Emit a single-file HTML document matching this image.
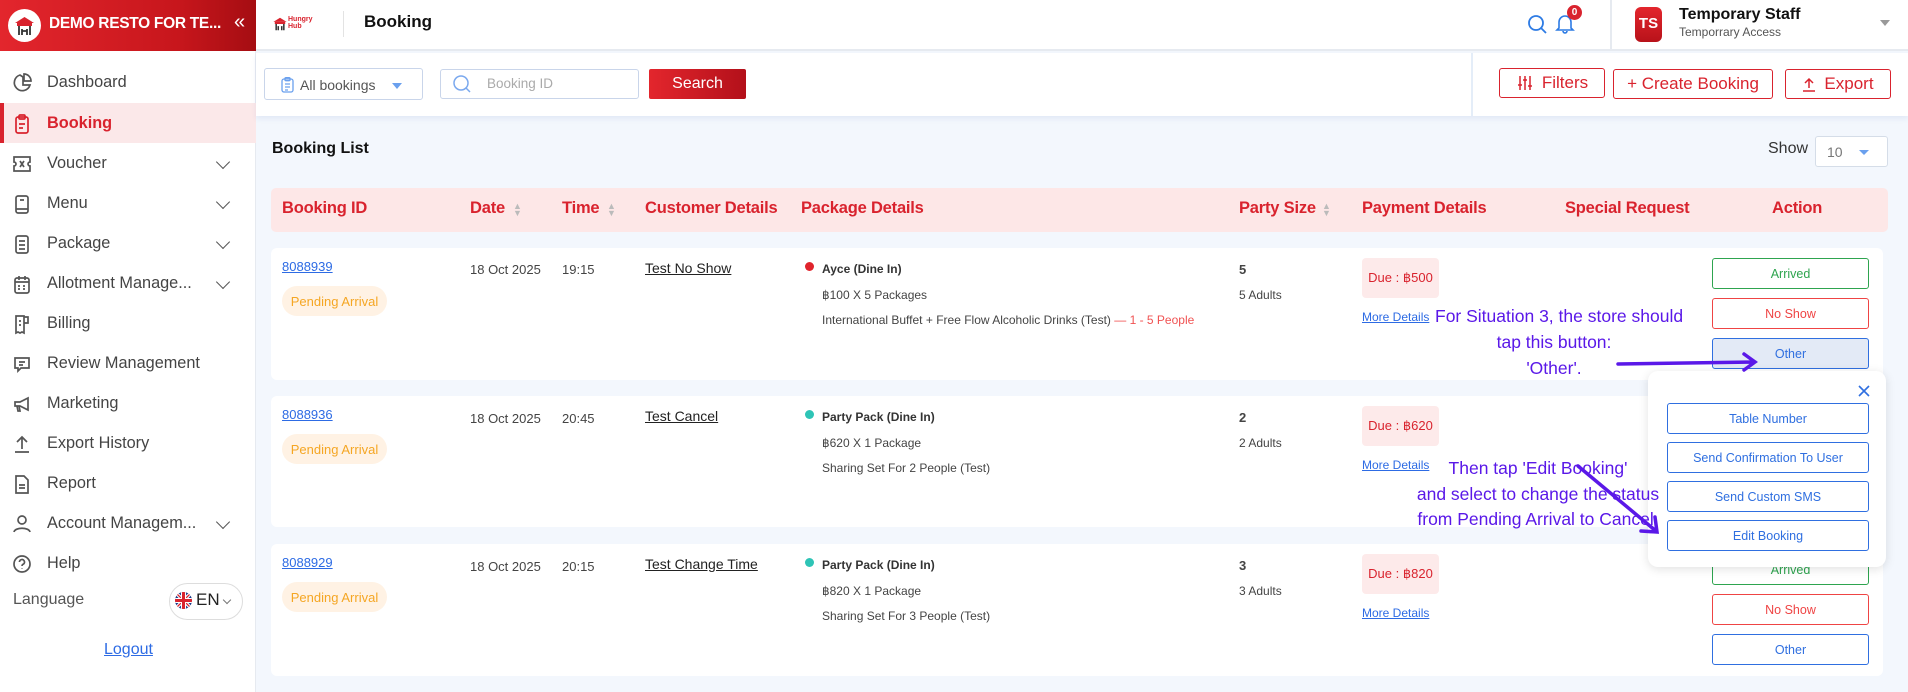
<!DOCTYPE html>
<html><head><meta charset="utf-8">
<style>
*{box-sizing:border-box;margin:0;padding:0}
body{width:1908px;height:692px;overflow:hidden;font-family:"Liberation Sans",sans-serif;background:#f3f7fd;position:relative;color:#333}
.a{position:absolute}
.side{left:0;top:0;width:256px;height:692px;background:#fff;border-right:1px solid #e6eaf0}
.brand{left:0;top:0;width:256px;height:51px;background:linear-gradient(90deg,#e3262d,#c7161c 70%,#a50d12)}
.nav{left:0;width:256px;height:40px;font-size:16.3px;color:#444;display:flex;align-items:center;padding-left:47px}
.nav svg{position:absolute;left:11px;top:10px}
.chev{position:absolute;left:218px;top:14px;width:10px;height:10px;border-right:1.6px solid #555;border-bottom:1.6px solid #555;transform:rotate(45deg)}
.btnr{border:1.5px solid #d9232e;border-radius:3px;color:#d9232e;font-size:17px;display:flex;align-items:center;justify-content:center;background:#fff}
.th{font-size:16.5px;font-weight:bold;color:#d9232e;top:199px;letter-spacing:-0.2px}
.card{left:271px;width:1612px;background:#fff;border-radius:6px}
.id{color:#2d6be4;text-decoration:underline;font-size:13px}
.pill{width:105px;height:30px;border-radius:15px;background:#fff2e4;color:#f5a623;font-size:13px;display:flex;align-items:center;justify-content:center}
.t13{font-size:13px;color:#444}
.due{width:77px;height:40px;background:#fdeaea;border-radius:4px;color:#d9232e;font-size:13px;display:flex;align-items:center;justify-content:center}
.md{font-size:12px;color:#2d6be4;text-decoration:underline}
.ab{width:157px;height:31px;border:1.3px solid;border-radius:3px;font-size:12.5px;display:flex;align-items:center;justify-content:center;background:#fff}
.pb{left:1667px;width:202px;height:31px;border:1.3px solid #2f6fe0;border-radius:3px;color:#2f6fe0;font-size:12.5px;display:flex;align-items:center;justify-content:center;background:#fff}
.ann{color:#5a18e8;font-size:17.5px;text-align:center;white-space:nowrap}
</style></head><body>

<div class="a side"></div>
<div class="a brand"></div>
<div class="a" style="left:8px;top:9px;width:33px;height:33px;border-radius:50%;background:#fff"></div>
<svg class="a" style="left:13px;top:15px" width="23" height="22" viewBox="0 0 23 22"><path d="M2 8 L11.5 2 L21 8 Z" fill="#d9232e"/><rect x="4" y="8" width="15" height="3" fill="#d9232e"/><path d="M6 11v9M17 11v9M9 14v6M14 14v6M9 16h5" stroke="#333" stroke-width="1.8" fill="none"/></svg>
<div class="a" style="left:49px;top:15px;color:#fff;font-weight:bold;font-size:15.5px;letter-spacing:-0.3px;transform:scaleX(1.0)">DEMO RESTO FOR TE...</div>
<div class="a" style="left:234px;top:11px;color:#fff;font-size:20px">«</div>

<div class="a nav" style="top:62px"><svg width="22" height="22" viewBox="0 0 22 22" fill="none" stroke="#555" stroke-width="1.7"><path d="M9 3a8 8 0 1 0 10 10h-7V5z"/><path d="M13 2v7h7a7 7 0 0 0-7-7z"/></svg>Dashboard</div>
<div class="a" style="left:0;top:103px;width:256px;height:40px;background:#fbe8e9;border-left:4px solid #d9232e"></div>
<div class="a nav" style="top:103px;color:#d9232e;font-weight:bold"><svg width="22" height="22" viewBox="0 0 22 22" fill="none" stroke="#d9232e" stroke-width="1.7"><rect x="5" y="4" width="12" height="16" rx="2"/><rect x="8" y="2" width="6" height="4" rx="1"/><path d="M8 11h6M8 15h4"/></svg>Booking</div>
<div class="a nav" style="top:143px"><svg width="22" height="22" viewBox="0 0 22 22" fill="none" stroke="#555" stroke-width="1.7"><path d="M3 4h16v5a2 2 0 0 0 0 4v5H3v-5a2 2 0 0 0 0-4z"/><path d="M9 8l4 6M13 8l-4 6"/></svg>Voucher<span class="chev"></span></div>
<div class="a nav" style="top:183px"><svg width="22" height="22" viewBox="0 0 22 22" fill="none" stroke="#555" stroke-width="1.7"><rect x="5" y="3" width="12" height="17" rx="2"/><path d="M9 7h4M5 16h12"/></svg>Menu<span class="chev"></span></div>
<div class="a nav" style="top:223px"><svg width="22" height="22" viewBox="0 0 22 22" fill="none" stroke="#555" stroke-width="1.7"><rect x="5" y="3" width="12" height="17" rx="2"/><path d="M8 8h6M8 12h6M8 16h6"/></svg>Package<span class="chev"></span></div>
<div class="a nav" style="top:263px"><svg width="22" height="22" viewBox="0 0 22 22" fill="none" stroke="#555" stroke-width="1.7"><rect x="4" y="5" width="14" height="15" rx="2"/><path d="M4 9h14M8 3v4M14 3v4M7 13h2M12 13h2M7 16h2M12 16h2"/></svg>Allotment Manage...<span class="chev"></span></div>
<div class="a nav" style="top:303px"><svg width="22" height="22" viewBox="0 0 22 22" fill="none" stroke="#555" stroke-width="1.7"><path d="M5 20V3h8v17l-2-1-2 1-2-1zM13 4h4v6h-4M8 8h2M8 12h2"/></svg>Billing</div>
<div class="a nav" style="top:343px"><svg width="22" height="22" viewBox="0 0 22 22" fill="none" stroke="#555" stroke-width="1.7"><path d="M4 5h14v10H10l-3 3v-3H4z"/><path d="M8 9h6M8 12h4"/></svg>Review Management</div>
<div class="a nav" style="top:383px"><svg width="22" height="22" viewBox="0 0 22 22" fill="none" stroke="#555" stroke-width="1.7"><path d="M4 9h5l8-4v12l-8-4H4zM6 13l1 5h2l-1-5"/></svg>Marketing</div>
<div class="a nav" style="top:423px"><svg width="22" height="22" viewBox="0 0 22 22" fill="none" stroke="#555" stroke-width="1.7"><path d="M11 16V4M6 9l5-5 5 5M4 19h14"/></svg>Export History</div>
<div class="a nav" style="top:463px"><svg width="22" height="22" viewBox="0 0 22 22" fill="none" stroke="#555" stroke-width="1.7"><path d="M5 3h8l4 4v13H5z"/><path d="M8 12h6M8 15h6"/></svg>Report</div>
<div class="a nav" style="top:503px"><svg width="22" height="22" viewBox="0 0 22 22" fill="none" stroke="#555" stroke-width="1.7"><circle cx="11" cy="7" r="4"/><path d="M3 19c1-5 15-5 16 0"/></svg>Account Managem...<span class="chev"></span></div>
<div class="a nav" style="top:543px"><svg width="22" height="22" viewBox="0 0 22 22" fill="none" stroke="#555" stroke-width="1.7"><circle cx="11" cy="11" r="8"/><path d="M8.5 9a2.5 2.5 0 1 1 3.5 2.3c-.7.4-1 .9-1 1.7M11 15.5v.5"/></svg>Help</div>
<div class="a" style="left:13px;top:591px;font-size:16px;color:#555">Language</div>
<div class="a" style="left:169px;top:583px;width:74px;height:37px;border:1px solid #ddd;border-radius:19px"></div>
<svg class="a" style="left:175px;top:592px" width="17" height="17" viewBox="0 0 20 20"><clipPath id="c"><circle cx="10" cy="10" r="10"/></clipPath><g clip-path="url(#c)"><rect width="20" height="20" fill="#1a3a8a"/><path d="M0 0L20 20M20 0L0 20" stroke="#fff" stroke-width="4"/><path d="M0 0L20 20M20 0L0 20" stroke="#d9232e" stroke-width="1.5"/><path d="M10 0v20M0 10h20" stroke="#fff" stroke-width="6"/><path d="M10 0v20M0 10h20" stroke="#d9232e" stroke-width="3.5"/></g></svg>
<div class="a" style="left:196px;top:590px;font-size:17px;color:#222">EN</div>
<div class="a" style="left:224px;top:597px;width:6px;height:6px;border-right:1px solid #777;border-bottom:1px solid #777;transform:rotate(45deg)"></div>
<div class="a" style="left:104px;top:641px;font-size:16px;color:#2d6be4;text-decoration:underline">Logout</div>

<div class="a" style="left:256px;top:0;width:1652px;height:51px;background:#fff;border-bottom:2px solid #e6eaf0"></div>
<svg class="a" style="left:272px;top:16px" width="16" height="16" viewBox="0 0 23 22"><path d="M2 8 L11.5 2 L21 8 Z" fill="#d9232e"/><rect x="4" y="8" width="15" height="3" fill="#d9232e"/><path d="M6 11v9M17 11v9M9 14v6M14 14v6" stroke="#333" stroke-width="2.2" fill="none"/></svg>
<div class="a" style="left:288px;top:16px;font-size:7px;font-weight:bold;color:#d9232e;line-height:7px">Hungry<br>Hub</div>
<div class="a" style="left:343px;top:11px;width:1px;height:26px;background:#e3e3e3"></div>
<div class="a" style="left:364px;top:12px;font-size:17px;font-weight:bold;color:#111">Booking</div>
<svg class="a" style="left:1526px;top:13px" width="22" height="22" viewBox="0 0 22 22" fill="none" stroke="#2d7be4" stroke-width="1.8"><circle cx="10" cy="10" r="7"/><path d="M15 15l5 5"/></svg>
<svg class="a" style="left:1555px;top:12px" width="20" height="22" viewBox="0 0 20 22" fill="none" stroke="#2d7be4" stroke-width="1.6"><path d="M4 16V10a6 6 0 0 1 12 0v6l2 2H2zM8 19a2 2 0 0 0 4 0"/></svg>
<div class="a" style="left:1567px;top:5px;width:15px;height:15px;border-radius:50%;background:#d9232e;color:#fff;font-size:10px;text-align:center;line-height:15px;font-weight:bold">0</div>
<div class="a" style="left:1610px;top:0;width:2px;height:51px;background:#e6eaf0"></div>
<div class="a" style="left:1635px;top:7px;width:27px;height:35px;border-radius:6px;background:linear-gradient(#e3262d,#b8121a)"></div>
<div class="a" style="left:1635px;top:7px;width:27px;height:35px;color:#fff;font-weight:bold;font-size:15px;text-align:center;line-height:34px">TS</div>
<div class="a" style="left:1679px;top:6px;font-size:16px;font-weight:bold;color:#111">Temporary Staff</div>
<div class="a" style="left:1679px;top:25px;font-size:12px;color:#555">Temporrary Access</div>
<div class="a" style="left:1880px;top:20px;width:0;height:0;border-left:5px solid transparent;border-right:5px solid transparent;border-top:6px solid #999"></div>

<div class="a" style="left:256px;top:53px;width:1652px;height:63px;background:#fff;box-shadow:0 3px 5px rgba(40,80,160,.08)"></div>
<div class="a" style="left:1471px;top:53px;width:2px;height:63px;background:#e4edf8"></div>
<div class="a" style="left:264px;top:68px;width:159px;height:32px;border:1px solid #c9d5ea;border-radius:3px"></div>
<svg class="a" style="left:281px;top:77px" width="13" height="16" viewBox="0 0 13 16" fill="none" stroke="#6aa0ee" stroke-width="1.3"><rect x="1" y="2" width="11" height="13" rx="2"/><rect x="4" y="0.7" width="5" height="3" rx="1"/><path d="M4 7h5M4 10h5M4 13h3"/></svg>
<div class="a" style="left:300px;top:77px;font-size:14px;color:#555">All bookings</div>
<div class="a" style="left:392px;top:83px;border-left:5px solid transparent;border-right:5px solid transparent;border-top:6px solid #6aa0ee"></div>
<div class="a" style="left:440px;top:69px;width:199px;height:30px;border:1px solid #c9d5ea;border-radius:3px"></div>
<svg class="a" style="left:451px;top:73px" width="22" height="22" viewBox="0 0 22 22" fill="none" stroke="#7aa8ee" stroke-width="1.5"><circle cx="10" cy="10" r="7"/><path d="M15 15l4 4"/></svg>
<div class="a" style="left:487px;top:76px;font-size:13.5px;color:#aaa">Booking ID</div>
<div class="a" style="left:649px;top:69px;width:97px;height:30px;border-radius:2px;background:linear-gradient(90deg,#e3262d,#b3101a);color:#fff;font-size:16px;display:flex;align-items:center;justify-content:center">Search</div>
<div class="a btnr" style="left:1499px;top:68px;width:106px;height:30px"><svg width="18" height="18" viewBox="0 0 18 18" fill="none" stroke="#d9232e" stroke-width="1.5" style="margin-right:8px"><path d="M4 2v14M9 2v14M14 2v14M2 11h4M7 6h4M12 12h4"/></svg>Filters</div>
<div class="a btnr" style="left:1613px;top:69px;width:160px;height:30px">+ Create Booking</div>
<div class="a btnr" style="left:1785px;top:69px;width:106px;height:30px"><svg width="14" height="16" viewBox="0 0 14 16" fill="none" stroke="#d9232e" stroke-width="1.5" style="margin-right:8px"><path d="M7 12V3M3 7l4-4 4 4M1 15h12"/></svg>Export</div>

<div class="a" style="left:272px;top:140px;font-size:16px;font-weight:bold;color:#111">Booking List</div>
<div class="a" style="left:1768px;top:140px;font-size:16px;color:#333">Show</div>
<div class="a" style="left:1815px;top:136px;width:73px;height:31px;border:1px solid #d5dde8;border-radius:3px;background:#fff"></div>
<div class="a" style="left:1827px;top:144px;font-size:14px;color:#777">10</div>
<div class="a" style="left:1859px;top:150px;border-left:5px solid transparent;border-right:5px solid transparent;border-top:5px solid #6aa0ee"></div>

<div class="a" style="left:271px;top:188px;width:1617px;height:44px;background:#fde7e7;border-radius:5px"></div>
<div class="a th" style="left:282px">Booking ID</div>
<div class="a th" style="left:470px">Date</div><div class="a" style="left:513px;top:203px;color:#bbb;font-size:9px;line-height:7px">▲<br>▼</div>
<div class="a th" style="left:562px">Time</div><div class="a" style="left:607px;top:203px;color:#bbb;font-size:9px;line-height:7px">▲<br>▼</div>
<div class="a th" style="left:645px">Customer Details</div>
<div class="a th" style="left:801px">Package Details</div>
<div class="a th" style="left:1239px">Party Size</div><div class="a" style="left:1322px;top:203px;color:#bbb;font-size:9px;line-height:7px">▲<br>▼</div>
<div class="a th" style="left:1362px">Payment Details</div>
<div class="a th" style="left:1565px">Special Request</div>
<div class="a th" style="left:1772px">Action</div>

<div class="a card" style="top:248px;height:132px"></div>
<div class="a id" style="left:282px;top:259px">8088939</div>
<div class="a pill" style="left:282px;top:286px">Pending Arrival</div>
<div class="a t13" style="left:470px;top:262px">18 Oct 2025</div>
<div class="a t13" style="left:562px;top:262px">19:15</div>
<div class="a" style="left:645px;top:260px;font-size:14px;color:#222;text-decoration:underline">Test No Show</div>
<div class="a" style="left:805px;top:262px;width:9px;height:9px;border-radius:50%;background:#e0242c"></div>
<div class="a t13" style="left:822px;top:262px;font-weight:bold;font-size:12px;color:#333">Ayce (Dine In)</div>
<div class="a t13" style="left:822px;top:288px;font-size:12px">฿100 X 5 Packages</div>
<div class="a t13" style="left:822px;top:313px;font-size:12px">International Buffet + Free Flow Alcoholic Drinks (Test) <span style="color:#f05252">— 1 - 5 People</span></div>
<div class="a t13" style="left:1239px;top:262px;font-weight:bold">5</div>
<div class="a t13" style="left:1239px;top:288px;font-size:12px">5 Adults</div>
<div class="a due" style="left:1362px;top:258px">Due : ฿500</div>
<div class="a md" style="left:1362px;top:310px">More Details</div>
<div class="a ab" style="left:1712px;top:258px;border-color:#2ea44f;color:#2ea44f">Arrived</div>
<div class="a ab" style="left:1712px;top:298px;border-color:#ef4444;color:#ef4444">No Show</div>
<div class="a ab" style="left:1712px;top:338px;border-color:#2f6fe0;color:#2f6fe0;background:#e3eaf6">Other</div>

<div class="a card" style="top:396px;height:131px"></div>
<div class="a id" style="left:282px;top:407px">8088936</div>
<div class="a pill" style="left:282px;top:434px">Pending Arrival</div>
<div class="a t13" style="left:470px;top:411px">18 Oct 2025</div>
<div class="a t13" style="left:562px;top:411px">20:45</div>
<div class="a" style="left:645px;top:408px;font-size:14px;color:#222;text-decoration:underline">Test Cancel</div>
<div class="a" style="left:805px;top:410px;width:9px;height:9px;border-radius:50%;background:#2ec4b6"></div>
<div class="a t13" style="left:822px;top:410px;font-weight:bold;font-size:12px;color:#333">Party Pack (Dine In)</div>
<div class="a t13" style="left:822px;top:436px;font-size:12px">฿620 X 1 Package</div>
<div class="a t13" style="left:822px;top:461px;font-size:12px">Sharing Set For 2 People (Test)</div>
<div class="a t13" style="left:1239px;top:410px;font-weight:bold">2</div>
<div class="a t13" style="left:1239px;top:436px;font-size:12px">2 Adults</div>
<div class="a due" style="left:1362px;top:406px">Due : ฿620</div>
<div class="a md" style="left:1362px;top:458px">More Details</div>

<div class="a card" style="top:544px;height:132px"></div>
<div class="a id" style="left:282px;top:555px">8088929</div>
<div class="a pill" style="left:282px;top:582px">Pending Arrival</div>
<div class="a t13" style="left:470px;top:559px">18 Oct 2025</div>
<div class="a t13" style="left:562px;top:559px">20:15</div>
<div class="a" style="left:645px;top:556px;font-size:14px;color:#222;text-decoration:underline">Test Change Time</div>
<div class="a" style="left:805px;top:558px;width:9px;height:9px;border-radius:50%;background:#2ec4b6"></div>
<div class="a t13" style="left:822px;top:558px;font-weight:bold;font-size:12px;color:#333">Party Pack (Dine In)</div>
<div class="a t13" style="left:822px;top:584px;font-size:12px">฿820 X 1 Package</div>
<div class="a t13" style="left:822px;top:609px;font-size:12px">Sharing Set For 3 People (Test)</div>
<div class="a t13" style="left:1239px;top:558px;font-weight:bold">3</div>
<div class="a t13" style="left:1239px;top:584px;font-size:12px">3 Adults</div>
<div class="a due" style="left:1362px;top:554px">Due : ฿820</div>
<div class="a md" style="left:1362px;top:606px">More Details</div>
<div class="a ab" style="left:1712px;top:554px;border-color:#2ea44f;color:#2ea44f">Arrived</div>
<div class="a ab" style="left:1712px;top:594px;border-color:#ef4444;color:#ef4444">No Show</div>
<div class="a ab" style="left:1712px;top:634px;border-color:#2f6fe0;color:#2f6fe0">Other</div>

<div class="a" style="left:1648px;top:371px;width:238px;height:196px;background:#fff;border-radius:10px;box-shadow:0 2px 10px rgba(0,0,0,.12)"></div>
<svg class="a" style="left:1858px;top:385px" width="12" height="12" viewBox="0 0 12 12" stroke="#2f6fe0" stroke-width="1.6"><path d="M1 1l10 10M11 1L1 11"/></svg>
<div class="a pb" style="top:403px">Table Number</div>
<div class="a pb" style="top:442px">Send Confirmation To User</div>
<div class="a pb" style="top:481px">Send Custom SMS</div>
<div class="a pb" style="top:520px">Edit Booking</div>

<div class="a ann" style="left:1435px;top:306px;width:238px">For Situation 3, the store should</div>
<div class="a ann" style="left:1435px;top:332px;width:238px">tap this button:</div>
<div class="a ann" style="left:1435px;top:358px;width:238px">'Other'.</div>
<div class="a ann" style="left:1400px;top:458px;width:276px">Then tap 'Edit Booking'</div>
<div class="a ann" style="left:1400px;top:484px;width:276px">and select to change the status</div>
<div class="a ann" style="left:1400px;top:509px;width:276px">from Pending Arrival to Cancel.</div>
<svg class="a" style="left:0;top:0" width="1908" height="692" viewBox="0 0 1908 692" fill="none" stroke="#5a18e8" stroke-width="3.5" stroke-linecap="round">
<path d="M1618 364L1755 362M1744 354l11 8-11 8"/>
<path d="M1578 466L1656 531M1641 531l16 1-2-15"/>
</svg>
</body></html>
